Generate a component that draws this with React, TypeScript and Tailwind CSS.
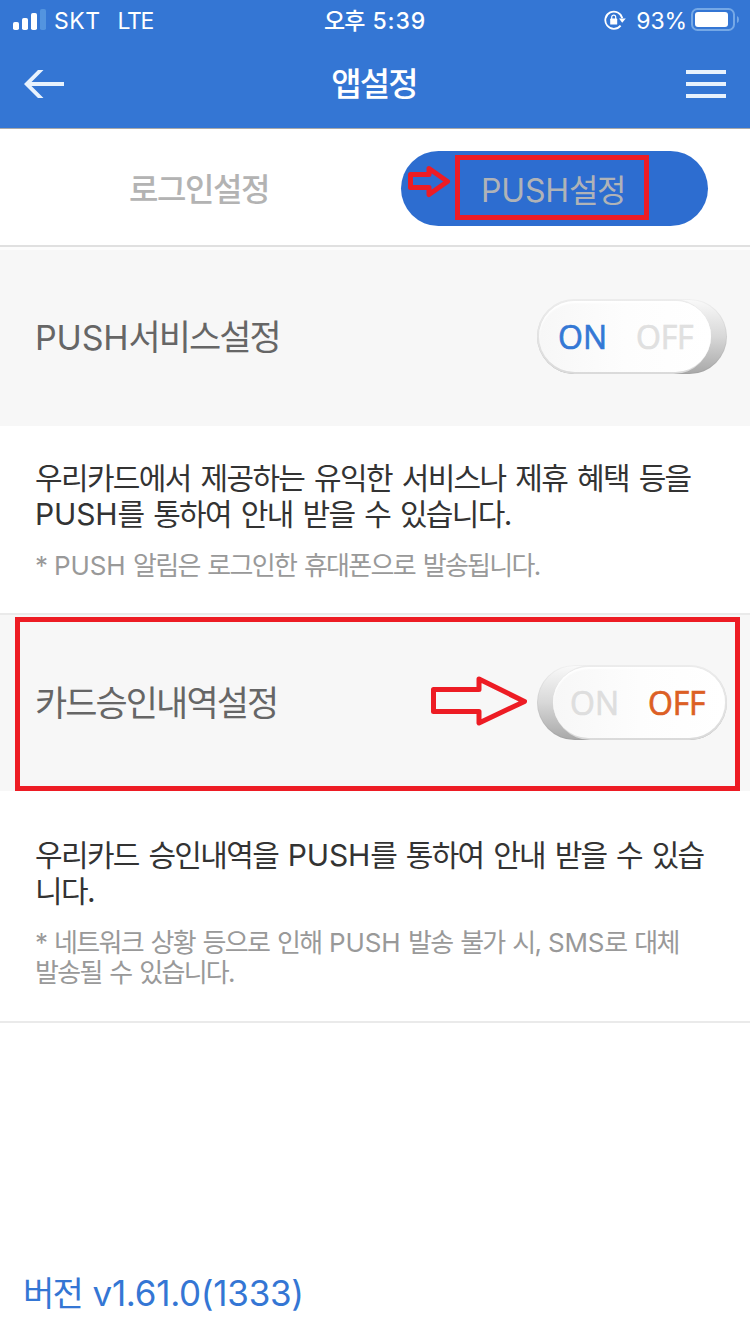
import type { ReactNode } from "react";
import { clsx } from "clsx";

// Latin runs keep their natural spacing, Hangul around them is set tighter
function Latin({ children }: { children: ReactNode }) {
  return <span className="tracking-[-0.005em]">{children}</span>;
}

function StatusBar() {
  return (
    <div className="relative flex h-10 items-center justify-between pl-[13px] pr-[10px] text-[23px] text-white">
      <div className="flex items-center">
        <svg width="34" height="22" viewBox="0 0 34 22" className="mb-px" fill="#fff">
          <rect x="0" y="13" width="6" height="8" rx="1.8" />
          <rect x="9" y="9" width="6" height="12" rx="1.8" />
          <rect x="18" y="4" width="6" height="17" rx="1.8" />
          <rect x="27" y="0" width="6" height="21" rx="1.8" fill="#5394df" />
        </svg>
        <span className="ml-[7px] pt-0.5 tracking-[0.5px]">SKT</span>
        <span className="ml-[17px] pt-0.5 tracking-[-1.3px]">LTE</span>
      </div>
      <div className="absolute left-1/2 -translate-x-1/2 whitespace-nowrap pt-0.5 font-medium">
        <span className="tracking-[-0.04em]">오후</span>
        <span className="ml-2 tracking-[0.9px]">5:39</span>
      </div>
      <div className="flex items-center">
        <svg width="22" height="20" viewBox="0 0 22 20" fill="none" stroke="#fff" strokeWidth="1.8">
          <path d="M16.600 15.600A8.600 8.600 0 1 1 18.300 8.300" />
          <path d="M15 8.400h6.800L18.200 12.800z" fill="#fff" stroke="none" />
          <rect x="6.2" y="8.6" width="7" height="6" rx="0.6" fill="#fff" stroke="none" />
          <path d="M7.700 9.400V7.200a2 2 0 0 1 4 0v2.200" strokeWidth="1.2" />
        </svg>
        <span className="ml-[10px] pt-0.5 tracking-[-0.1px]">93%</span>
        <svg width="49" height="24" viewBox="0 0 49 24" className="ml-1">
          <rect x="1" y="1" width="42" height="21" rx="5.5" fill="none" stroke="#75a8e6" strokeWidth="2" />
          <rect x="4" y="4" width="33" height="15" rx="3" fill="#fff" />
          <path d="M46 8q2 .8 2 3.500t-2 3.500z" fill="#75a8e6" />
        </svg>
      </div>
    </div>
  );
}

function Header() {
  return (
    <header className="h-[129px] border-b border-[#a9a9a9] bg-[#3476d4]">
      <StatusBar />
      <div className="flex h-[88px] items-center justify-between px-6">
        <svg width="40" height="28" viewBox="0 0 40 28" fill="#e8f2fd">
          <path d="M0 14 14 0h5.500L7.500 12H40v4H7.500l12 12H14z" />
        </svg>
        <h1 className="pr-0.5 pt-0.5 text-[33px] font-medium tracking-[-0.055em] text-white">앱설정</h1>
        <div className="flex flex-col gap-2">
          <div className="h-1 w-10 bg-[#e8f2fd]" />
          <div className="h-1 w-10 bg-[#e8f2fd]" />
          <div className="h-1 w-10 bg-[#e8f2fd]" />
        </div>
      </div>
    </header>
  );
}

function Tabs() {
  return (
    <nav className="flex h-[118px] border-b-2 border-[#e0e0e0] pt-[22px]">
      <div className="flex h-[75px] w-[401px] items-center justify-center pr-[3px] pt-0.5 text-[32px] font-medium tracking-[-0.045em] text-[#b3b3b3]">
        로그인설정
      </div>
      <div className="relative flex h-[75px] w-[307px] items-center justify-center rounded-full bg-[#2d6dd0] text-[32px] text-[#b0b3b7]">
        <span className="pr-[3px] pt-[5px] tracking-[-0.045em]">
          <Latin>PUSH</Latin>설정
        </span>
        <svg className="absolute left-[6px] top-[14px]" width="44" height="34" viewBox="0 0 44 34" fill="none">
          <path d="M3.500 9.500H22V3.500L40.500 16.500 22 29.500V22.500H3.500z" stroke="#ed1c24" strokeWidth="5" strokeLinejoin="round" />
        </svg>
        <div className="absolute left-[54px] top-1 h-[65px] w-[194px] border-[5px] border-[#ed1c24]" />
      </div>
    </nav>
  );
}

function Toggle({ on }: { on: boolean }) {
  return (
    <div
      className={clsx(
        "flex h-[75px] w-[190px] rounded-full bg-linear-to-b from-[#fafafa] via-[#d8d8d8] to-[#a8a8a8] font-['Open_Sans',sans-serif] text-[32px] font-medium shadow-[inset_0_0_0_1px_rgba(0,0,0,0.04)] [-webkit-text-stroke:0.7px_currentColor]",
        on ? "justify-start" : "justify-end"
      )}
    >
      {/* the rim is left out on the side that faces the shaded track */}
      <div
        className={clsx(
          "h-[75px] w-[174px] rounded-full bg-linear-to-b from-[#ececec] to-[#dadada] py-[2px]",
          on ? "pl-[2px]" : "pr-[2px]"
        )}
      >
        <div
          className={clsx(
            "flex h-full items-center rounded-full bg-linear-to-r from-[#f7f7f7] via-[#fdfdfd] to-white shadow-[inset_0_2px_2px_#fff]",
            on ? "pl-[19px]" : "pl-[17px]"
          )}
        >
          <span className={clsx("w-[78px] pt-px tracking-[0.2px]", on ? "text-[#3478d5]" : "text-[#dedede]")}>ON</span>
          <span className={clsx("pt-px tracking-[-0.2px]", on ? "text-[#e0e0e0]" : "text-[#dc5f25]")}>OFF</span>
        </div>
      </div>
    </div>
  );
}

export default function App() {
  return (
    <div className="flex h-[1334px] w-[750px] flex-col overflow-hidden bg-white font-['Inter','Noto_Sans_CJK_KR',sans-serif]">
      <Header />
      <Tabs />

      <section className="flex h-[179px] items-center justify-between border-t-[3px] border-[#fcfcfc] bg-[#f7f7f7] pb-[3px] pl-[35px] pr-[23px]">
        <h2 className="pt-0.5 text-[35px] tracking-[-0.055em] text-[#666]">
          <span className="text-[34px] tracking-[-0.005em]">PUSH</span>서비스설정
        </h2>
        <Toggle on />
      </section>
      <div className="h-[187px] whitespace-nowrap px-[35px] pt-[34px]">
        <p className="text-[30px] leading-9 tracking-[-0.055em] text-[#333] [word-spacing:3px]">
          우리카드에서 제공하는 유익한 서비스나 제휴 혜택 등을
          <br />
          <Latin>PUSH</Latin>를 통하여 안내 받을 수 있습니다.
        </p>
        <p className="mt-[19px] text-[26px] leading-[30px] tracking-[-0.065em] text-[#999] [word-spacing:2px]">
          * <Latin>PUSH</Latin> 알림은 로그인한 휴대폰으로 발송됩니다.
        </p>
      </div>

      <section className="relative flex h-[178px] items-center justify-between border-t-2 border-[#eaeaea] bg-[#f7f7f7] pb-px pl-[35px] pr-[23px]">
        <h2 className="pt-px text-[35px] tracking-[-0.055em] text-[#666]">카드승인내역설정</h2>
        <Toggle on={false} />
        <div className="absolute left-[15px] top-[2px] h-[174px] w-[725px] border-[5px] border-[#ed1c24]" />
        <svg className="absolute left-[431px] top-[61px]" width="96" height="51" viewBox="0 0 96 51" fill="none">
          <path d="M2.500 13.500H48V3L93.500 25.500 48 47V35.500H2.500z" stroke="#ed1c24" strokeWidth="5" strokeLinejoin="round" />
        </svg>
      </section>
      <div className="h-[232px] whitespace-nowrap border-b-2 border-[#eaeaea] px-[35px] pt-[46px]">
        <p className="text-[30px] leading-9 tracking-[-0.055em] text-[#333] [word-spacing:2.8px]">
          우리카드 승인내역을 <Latin>PUSH</Latin>를 통하여 안내 받을 수 있습
          <br />
          니다.
        </p>
        <p className="mt-[19px] text-[26px] leading-[30px] tracking-[-0.065em] text-[#999] [word-spacing:2px]">
          * 네트워크 상황 등으로 인해 <Latin>PUSH</Latin> 발송 불가 시, <Latin>SMS</Latin>로 대체
          <br />
          발송될 수 있습니다.
        </p>
      </div>

      <footer className="mt-auto flex h-[82px] items-center px-[23px] text-[34px] tracking-[-0.055em] text-[#3476d4] [word-spacing:3px]">
        <span>
          버전 <span className="text-[35px] tracking-[-0.008em]">v1.61.0(1333)</span>
        </span>
      </footer>
    </div>
  );
}
